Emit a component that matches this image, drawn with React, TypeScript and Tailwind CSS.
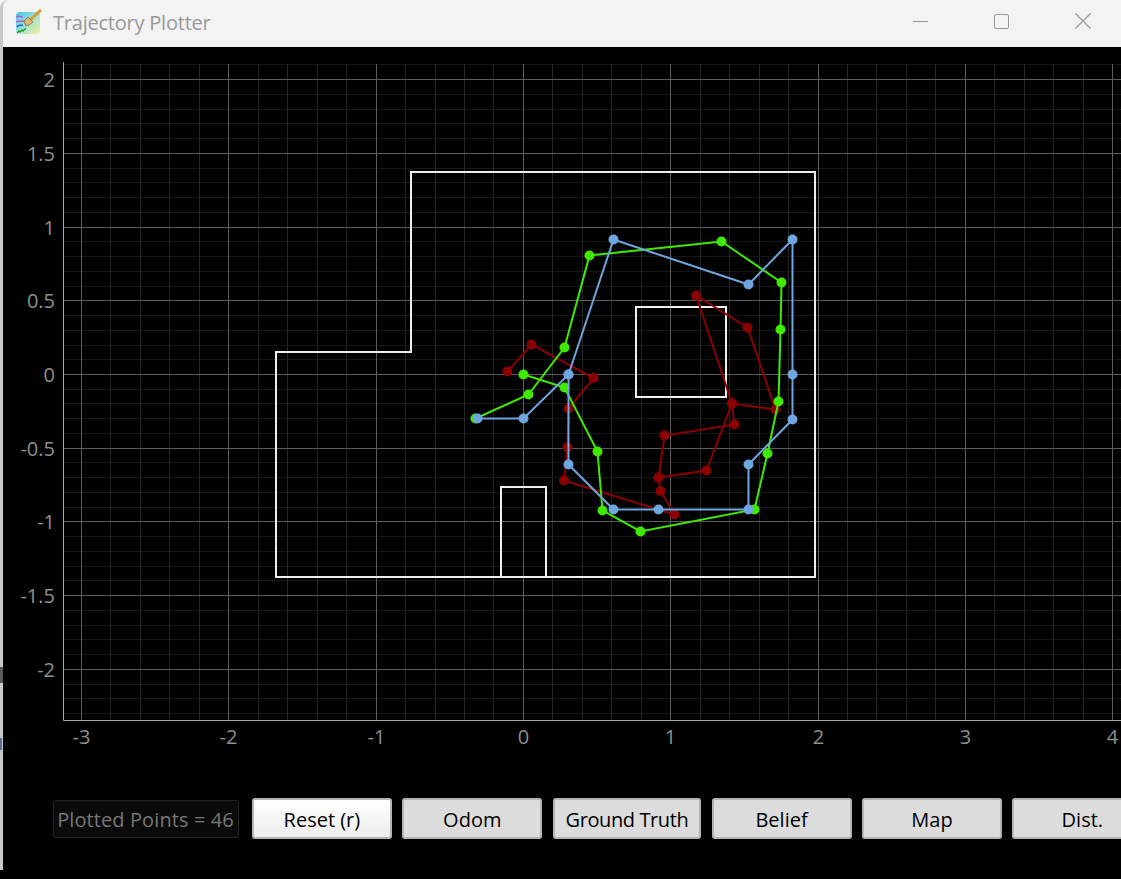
const SANS = "font-['Open_Sans','Noto_Sans',sans-serif]";

const X = (v: number) => Math.floor(523.4 + 147.3 * v) + 0.5;
const Y = (v: number) => Math.floor(374.5 - 147.4 * v) + 0.5;

const xMajor = [-3, -2, -1, 0, 1, 2, 3, 4];
const yMajor = [-2, -1.5, -1, -0.5, 0, 0.5, 1, 1.5, 2];
const xMinor = Array.from({ length: 36 }, (_, i) => -3 + i * 0.2).filter((v) => X(v) < 1121);
const yMinor = Array.from({ length: 45 }, (_, i) => -2.3 + i * 0.1);

const red: number[][] = [[507.5, 371.5], [531.5, 344.5], [593.5, 378], [568.5, 408.5], [567.5, 447.5], [564, 480.5], [674.5, 514.5], [660.5, 491], [658.5, 477.5], [706.5, 470.5], [732, 403.5], [775.5, 409.5], [747.5, 327.5], [696, 295.5], [732, 403.5], [734.5, 424.5], [664.5, 435.5], [658.5, 477.5]];
const green: number[][] = [[475.5, 418.5], [528.5, 394.5], [564.5, 347.5], [589.5, 255.5], [721.5, 241.5], [781.5, 282.5], [780.5, 329.5], [778.5, 401.5], [767.5, 453.5], [754.5, 509.5], [640.5, 531.5], [602.5, 510.5], [597.5, 451.5], [564.5, 387.5], [523.5, 374.5]];
const blue: number[][] = [[477.5, 418.5], [523.5, 418.5], [568.5, 374.5], [613.5, 239.5], [748.5, 284.5], [792.5, 239.5], [792.5, 374.5], [792.5, 419.5], [748.5, 464.5], [748.5, 509.5], [658.5, 509.5], [613.5, 509.5], [568.5, 464.5], [568.5, 374.5]];

const pts = (p: number[][]) => p.map((q) => q.join(",")).join(" ");

function Trace({ p, color }: { p: number[][]; color: string }) {
  return (
    <g>
      <polyline points={pts(p)} fill="none" stroke={color} strokeWidth={2} />
      {p.map((q, i) => (
        <circle key={i} cx={q[0]} cy={q[1]} r={5} fill={color} />
      ))}
    </g>
  );
}

function Plot() {
  const axisText = { fill: "#8f8f8f", fontSize: 20, fontFamily: "'Open Sans','Noto Sans',sans-serif" };
  return (
    <svg viewBox="3 47 1118 743" className="block w-[1118px] h-[743px] shrink-0">
      {yMinor.map((v) => (
        <line key={v} x1={64} x2={1121} y1={Y(v)} y2={Y(v)} stroke="#161616" strokeWidth={1} />
      ))}
      {xMinor.map((v) => (
        <line key={v} x1={X(v)} x2={X(v)} y1={64} y2={720} stroke="#262626" strokeWidth={1} />
      ))}
      {yMajor.map((v) => (
        <line key={v} x1={64} x2={1121} y1={Y(v)} y2={Y(v)} stroke="#5c5c5c" strokeWidth={1} />
      ))}
      {xMajor.map((v) => (
        <line key={v} x1={X(v)} x2={X(v)} y1={64} y2={720} stroke="#5c5c5c" strokeWidth={1} />
      ))}
      <path d="M63.5 62V720.5H1121" fill="none" stroke="#a8a8a8" strokeWidth={1} />
      {yMajor.map((v) => (
        <text key={v} x={55} y={Y(v) + 7.5} textAnchor="end" {...axisText}>
          {v < 0 ? `-${Math.abs(v)}` : v}
        </text>
      ))}
      {xMajor.map((v) => (
        <text key={v} x={X(v)} y={744} textAnchor="middle" {...axisText}>
          {v < 0 ? `-${Math.abs(v)}` : v}
        </text>
      ))}
      <g fill="none" stroke="#eeeeee" strokeWidth={2}>
        <path d="M411 172H815V577H276V352H411Z" />
        <path d="M636 307H726V397H636Z" />
        <path d="M501 577V487H546V577" />
      </g>
      <Trace p={red} color="#8b0000" />
      <Trace p={green} color="#3fea00" />
      <Trace p={blue} color="#6fa6e0" />
    </svg>
  );
}

function AppIcon() {
  return (
    <svg viewBox="0 0 28 26" className="w-[28px] h-[26px] shrink-0">
      <defs>
        <linearGradient id="ig" x1="0" y1="0" x2="1" y2="1">
          <stop offset="0" stopColor="#3fc8ee" />
          <stop offset="0.55" stopColor="#a8e4d0" />
          <stop offset="1" stopColor="#f6ee90" />
        </linearGradient>
      </defs>
      <rect x="1" y="3" width="24" height="22" rx="4" fill="url(#ig)" />
      <path d="M13 13L26 1" stroke="#d2a032" strokeWidth="3" fill="none" />
      <path d="M9 12l4-4 5 5-4 3-3 1z" fill="#e0b878" stroke="#8a6a30" strokeWidth="0.8" />
      <path d="M1 8c3-2 5 0 7 0M1 13c3-2 5 0 8-1" stroke="#c050d0" strokeWidth="1.4" fill="none" />
      <path d="M2 18c2-3 4-1 6-2" stroke="#2060c0" strokeWidth="1.4" fill="none" />
      <path d="M2 24l2-2 1 1 2-2 1 1 2-2 1 0" stroke="#20a020" strokeWidth="1.4" fill="none" />
    </svg>
  );
}

function TitleBar() {
  return (
    <div className="h-[47px] shrink-0 bg-[#ffffff]">
      <div className="flex h-full items-center rounded-tl-[8px] border-l-[3px] border-[#c8c8c8] bg-[#f3f3f3]">
        <div className="ml-[12px] mb-[3px]">
          <AppIcon />
        </div>
        <span className={`${SANS} ml-[10px] mb-[1px] text-[20px] leading-none tracking-[-0.22px] text-[#999999]`}>
          Trajectory Plotter
        </span>
        <div className="ml-auto flex h-full items-center pb-[5px]">
          <span className="mr-[66px] block h-px w-[15px] bg-[#999999]" />
          <span className="mr-[66px] block h-[15px] w-[15px] rounded-[2px] border-[1.5px] border-[#999999]" />
          <svg viewBox="0 0 16 16" className="mr-[30px] h-[16px] w-[16px] text-[#999999]">
            <path d="M0.5 0.5L15.5 15.5M15.5 0.5L0.5 15.5" stroke="currentColor" strokeWidth="1.2" fill="none" />
          </svg>
        </div>
      </div>
    </div>
  );
}

function Btn({ label, w, active, tight }: { label: string; w: string; active?: boolean; tight?: boolean }) {
  return (
    <button
      className={`${SANS} ${w} ${active ? "bg-gradient-to-b from-white to-[#ededed]" : "bg-[#dcdcdc]"} ${tight ? "tracking-[-0.4px]" : ""} h-[41px] shrink-0 rounded-[3px] border-2 border-[#b4b4b4] pt-[3px] text-[20px] leading-none text-black`}
    >
      {label}
    </button>
  );
}

export default function App() {
  return (
    <div className="flex h-[879px] w-[1121px] flex-col overflow-hidden bg-black">
      <TitleBar />
      <div className="relative flex flex-1 flex-col border-l-[3px] border-[#c8c8c8] bg-black">
        <span className="absolute left-[-3px] top-[620px] h-[16px] w-[3px] bg-[#5a5a5a]" />
        <span className="absolute left-[-3px] top-[691px] h-[12px] w-[2px] bg-[#5a7090]" />
        <span className="absolute left-[-3px] top-[823px] h-[9px] w-[3px] bg-[#000000]" />
        <Plot />
        <div className="mt-[8px] flex items-center gap-[10.4px] pl-[49.5px]">
          <div
            className={`${SANS} flex h-[38px] w-[186px] shrink-0 items-center justify-center rounded-[3px] border border-[#252525] bg-[#0a0a0a] pt-[2px] text-[20px] leading-none tracking-[0.1px] text-[#777777]`}
          >
            Plotted Points = 46
          </div>
          <div className="ml-[3px] flex items-center gap-[10.4px]">
            <Btn label="Reset (r)" w="w-[140px]" active />
            <Btn label="Odom" w="w-[140px]" />
            <Btn label="Ground Truth" w="w-[148.5px]" tight />
            <Btn label="Belief" w="w-[140px]" />
            <Btn label="Map" w="w-[140px]" />
            <Btn label="Dist." w="w-[140px]" />
          </div>
        </div>
      </div>
    </div>
  );
}
